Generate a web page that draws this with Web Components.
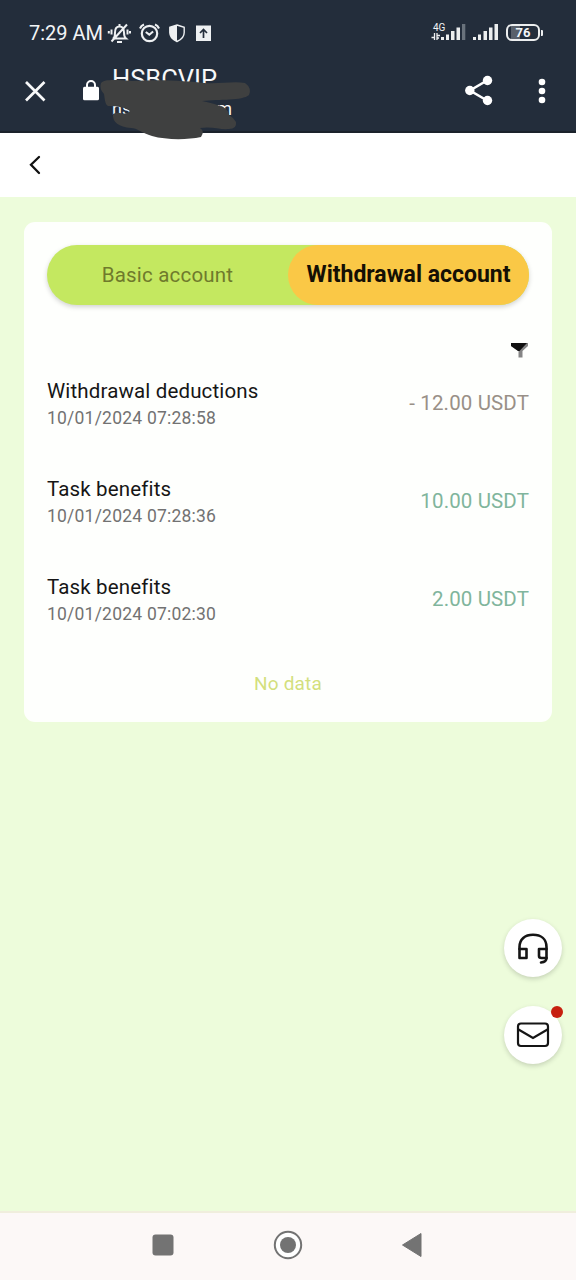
<!DOCTYPE html>
<html lang="en">
<head>
<meta charset="utf-8">
<meta name="viewport" content="width=device-width">
<title>Withdrawal account</title>
<style>
html,body{margin:0;height:100%}
body{font-family:Roboto,"Liberation Sans",sans-serif;background:#edfcdb}
</style>
</head>
<body>
<wallet-app></wallet-app>
<script>
const define = (name, html) => {
  const t = document.createElement('template');
  t.innerHTML = html;
  customElements.define(name, class extends HTMLElement {
    constructor() {
      super();
      this.attachShadow({mode: 'open'}).append(t.content.cloneNode(true));
    }
  });
};

define('status-bar', `
<style>
:host{display:flex;height:64px;box-sizing:border-box;padding:1px 33px 0 29px;align-items:center;color:#f2f4f6}
.time{font-size:20px;width:78px;white-space:nowrap;line-height:24px}
svg{display:block;flex:none}
.grow{flex:1}
.bat{font:700 13px/16px Roboto,sans-serif;width:34px;height:17px;box-sizing:border-box;border:2px solid #eceeef;border-radius:6px;text-align:center;line-height:14px;background:linear-gradient(90deg,#232d3b 3px,#59606a 3px 12px,#232d3b 12px);margin-left:7px}
.cap{width:2px;height:6px;background:#eceeef;margin-left:1px;border-radius:0 1px 1px 0}
.net{display:flex;flex-direction:column;width:16px;height:20px;margin-top:-1px}
.net span{font-size:10px;line-height:11px;padding-left:2px}
</style>
<span class="time">7:29 AM</span>
<svg width="108" height="22" viewBox="107 21 108 22" fill="none" stroke="#eef0f2" stroke-width="2">
 <path d="M113.500 37.500c1.500-1.500 1.500-3.500 1.500-6 0-4 2-6 4.500-6s4.500 2 4.500 6c0 2.500.2 4.500 2 6h-13.500M117 41h5M119.500 23v2M111.500 40.500l15.500-17M111.500 28.500v5M108.800 30v2.500M127.500 28.500v5M130 30v2.500"/>
 <circle cx="149.500" cy="32.500" r="7.700" stroke-width="2.200"/><path d="M145.800 31l3.500 2.700 3.800-3.200M140 27.500c.8-2 2-3.200 4-4M155 23.500c2 .8 3.200 2 4 4" stroke-width="2.100"/>
 <path d="M177 24l7.200 2.300v5.200c0 4.200-3 7.200-7.200 9-4.200-1.800-7.200-4.800-7.200-9v-5.200z" stroke-width="1.400"/><path d="M177 24v16.500c-4.200-1.800-7.200-4.800-7.200-9v-5.200z" fill="#eef0f2" stroke="none"/>
 <rect x="196" y="24.500" width="15" height="15.500" fill="#eef0f2" stroke="none"/><path d="M203.500 37v-8M200 32l3.500-3.500 3.500 3.500" stroke="#232d3b" stroke-width="1.700"/>
</svg>
<span class="grow"></span>
<div class="net"><span>4G</span><svg width="10" height="7" viewBox="0 0 10 7" stroke="#eef0f2" fill="none" stroke-width="1.300"><path d="M3.500 0v7M.5 4.500h3M6 0v7M6 2.500h3M6 5h2"/></svg></div>
<svg style="margin-left:-6px" width="58" height="17" viewBox="0 0 58 17" fill="#eceeef">
 <path d="M0 13h3v3H0zM5 10.500h3V16H5zM10 7h3.500v9H10zM15.500 3.500H19V16h-3.500zM32 13h3v3h-3zM37 10.500h3V16h-3zM42.500 7H46v9h-3.500zM48 3.500h3.500V16H48zM53.500 0H57v16h-3.500z"/><path fill="#69727c" d="M21 0h3.300v16H21z"/>
</svg>
<div class="bat">76</div><div class="cap"></div>`);

define('browser-bar', `
<style>
:host{display:grid;grid-template-columns:24px 64px 1fr 64px 38px;height:69px;box-sizing:border-box;padding:0 28px 0 24px;color:#f7f8f9;border-bottom:2px solid #1b222b;position:relative}
svg{display:block}
.x{margin-top:16px}.lock{margin:15px 0 0 34px}
.site{white-space:nowrap}
.t{font-size:25.500px;line-height:30px;height:28px}
.u{font-size:18px;line-height:18px;display:flex;justify-content:space-between;width:120px;margin-top:8px}
.share{margin-top:11px}.dots{margin-top:13px;margin-left:28px}
.mark{position:absolute;left:98px;top:10px;z-index:2}
</style>
<svg class="x" width="24" height="24" viewBox="0 0 24 24" stroke="#f7f8f9" stroke-width="2.700" fill="none"><path d="M2 2l18.500 18.500M20.500 2L2 20.500"/></svg>
<svg class="lock" width="18" height="22" viewBox="0 0 18 22"><path d="M5 9V6a4 4 0 0 1 8 0v3" fill="none" stroke="#fff" stroke-width="2"/><rect x="1" y="7.800" width="16" height="13.500" rx="1.500" fill="#fff"/></svg>
<div class="site"><div class="t">HSBCVIP</div><div class="u"><span>hs</span><span>m</span></div></div>
<svg class="share" style="margin-left:19px" width="30" height="32" viewBox="0 0 30 32"><path d="M22 5.500L5 15.500l17 10" stroke="#fff" stroke-width="2.600" fill="none"/><g fill="#fff"><circle cx="22.500" cy="5.500" r="4.700"/><circle cx="4.800" cy="15.500" r="4.700"/><circle cx="22.500" cy="25.500" r="4.700"/></g></svg>
<svg class="dots" width="8" height="28" viewBox="0 0 8 28" fill="#fff"><circle cx="4" cy="5" r="3.300"/><circle cx="4" cy="14" r="3.300"/><circle cx="4" cy="23" r="3.300"/></svg>
<svg class="mark" width="156" height="70" viewBox="98 74 156 70"><path fill="#3f4040" d="M101 83C105 79 116 80 132 81C160 79 189 81 204 83C220 84 234 81 245 83Q252 88 249 95C242 101 220 99 202 101C210 103 216 104 220 106Q228 108 229 115Q234 118 236 122Q237 129 229 129C220 130 212 126 200 128Q205 131 201 137C187 140 166 140 152 136C142 133 137 128 131 128C119 127 112 122 113 114Q117 112 120 113Q126 115 130 111Q124 106 108 106C105 104 105 100 104 94Q99 89 101 83Z"/></svg>`);

define('page-nav', `
<style>:host{display:flex;height:64px;background:#fff;box-sizing:border-box;padding:21px 0 0 28px}svg{display:block}</style>
<svg width="14" height="22" viewBox="0 0 14 22" fill="none" stroke="#111" stroke-width="2.300" stroke-linecap="round"><path d="M11 3L3 10.800 11 19"/></svg>`);

define('account-tabs', `
<style>
:host{display:grid;grid-template-columns:1fr 1fr;height:60px;border-radius:30px;background:#c4e860;box-shadow:0 2px 5px #0000002e;font-size:20.500px;line-height:60px;text-align:center;white-space:nowrap}
.a{color:#6f7a2c;letter-spacing:.2px}
.b{background:#fac846;border-radius:30px;color:#151004;font-weight:700;font-size:23px;line-height:60px}
</style><div class="a"><slot name="basic"></slot></div><div class="b"><slot name="withdrawal"></slot></div>`);

define('ledger-row', `
<style>
:host{display:flex;height:98px;justify-content:space-between;white-space:nowrap}
.n{font-size:20.500px;line-height:26px;color:#161616;letter-spacing:.15px}
.d{font-size:17.500px;line-height:29px;color:#727272;letter-spacing:.22px}
.v{font-size:20.500px;line-height:26px;margin-top:12px;color:var(--amount,#80b59c);letter-spacing:.12px}
</style><div><div class="n"><slot name="title"></slot></div><div class="d"><slot name="date"></slot></div></div><div class="v"><slot name="amount"></slot></div>`);

define('account-card', `
<style>
:host{display:block;margin:25px 24px 0;height:500px;box-sizing:border-box;padding:23px 23px 0;border-radius:11px;background:#fefffd}
.filter{display:flex;justify-content:flex-end;height:73px;box-sizing:border-box;padding:37px 1px 0 0}
svg{display:block}
.end{text-align:center;font-size:19px;line-height:24px;color:#d3df7d;letter-spacing:.2px}
</style>
<account-tabs><span slot="basic">Basic account</span><span slot="withdrawal">Withdrawal account</span></account-tabs>
<div class="filter"><svg width="18" height="16" viewBox="0 0 18 16"><path d="M1 1h17v3l-5.500 5v6.500H8.500V9L1 4z" fill="#858585"/><path d="M1 1h16L9.500 9 8 9 1 4z" fill="#101010"/></svg></div>
<ledger-row style="--amount:#999087"><span slot="title">Withdrawal deductions</span><span slot="date">10/01/2024 07:28:58</span><span slot="amount">- 12.00 USDT</span></ledger-row>
<ledger-row><span slot="title">Task benefits</span><span slot="date">10/01/2024 07:28:36</span><span slot="amount">10.00 USDT</span></ledger-row>
<ledger-row><span slot="title">Task benefits</span><span slot="date">10/01/2024 07:02:30</span><span slot="amount">2.00 USDT</span></ledger-row>
<div class="end">No data</div>`);

define('round-button', `
<style>:host{display:grid;place-items:center;width:58px;height:58px;border-radius:50%;background:#fff;box-shadow:0 2px 5px #0000002b;position:relative}</style><slot></slot>`);

define('float-actions', `
<style>:host{position:absolute;right:14px;top:919px;display:grid;gap:29px}svg{display:block}
.dot{position:absolute;right:-1px;top:0;width:12px;height:12px;border-radius:50%;background:#c7200f}</style>
<round-button><svg width="34" height="34" viewBox="0 0 34 34" fill="none" stroke="#151515" stroke-width="2.600" stroke-linejoin="round" stroke-linecap="round"><path d="M3.500 18v-2C3.500 8 9 3.800 17 3.800S30.500 8 30.500 16v11q0 4-5.500 4.500"/><path d="M3.500 18h7v9h-7zM30.500 27h-5q-2.500 0-2.500-2v-7h7.500"/></svg></round-button>
<round-button><svg width="34" height="28" viewBox="0 0 34 28" fill="none" stroke="#151515" stroke-width="2.200"><rect x="2" y="2.500" width="30" height="22.500" rx="3"/><path d="M2.500 8.500l14.500 8.500L31.500 8.500"/></svg><span class="dot"></span></round-button>`);

define('system-nav', `
<style>:host{display:grid;grid-template-columns:125px 124px 124px;justify-content:center;place-items:center;height:69px;box-sizing:border-box;border-top:2px solid #f0eedd;background:#fcf8f7;padding:0 2px 3px 0}svg{display:block}</style>
<svg width="22" height="22"><rect x=".5" y=".5" width="21" height="21" rx="3" fill="#737373"/></svg>
<svg width="30" height="30"><circle cx="15" cy="15" r="13.200" fill="#fff" stroke="#737373" stroke-width="2"/><circle cx="15" cy="15" r="8" fill="#737373"/></svg>
<svg width="22" height="26"><path d="M1.500 13L20 1.500v23z" fill="#737373" stroke="#737373" stroke-linejoin="round"/></svg>`);

define('wallet-app', `
<style>:host{display:flex;flex-direction:column;height:1280px;position:relative;background:#edfcdb}
header{background:#232d3b;height:133px}main{flex:1}</style>
<header><status-bar></status-bar><browser-bar></browser-bar></header>
<page-nav></page-nav><main><account-card></account-card></main>
<float-actions></float-actions><system-nav></system-nav>`);
</script>
</body>
</html>
